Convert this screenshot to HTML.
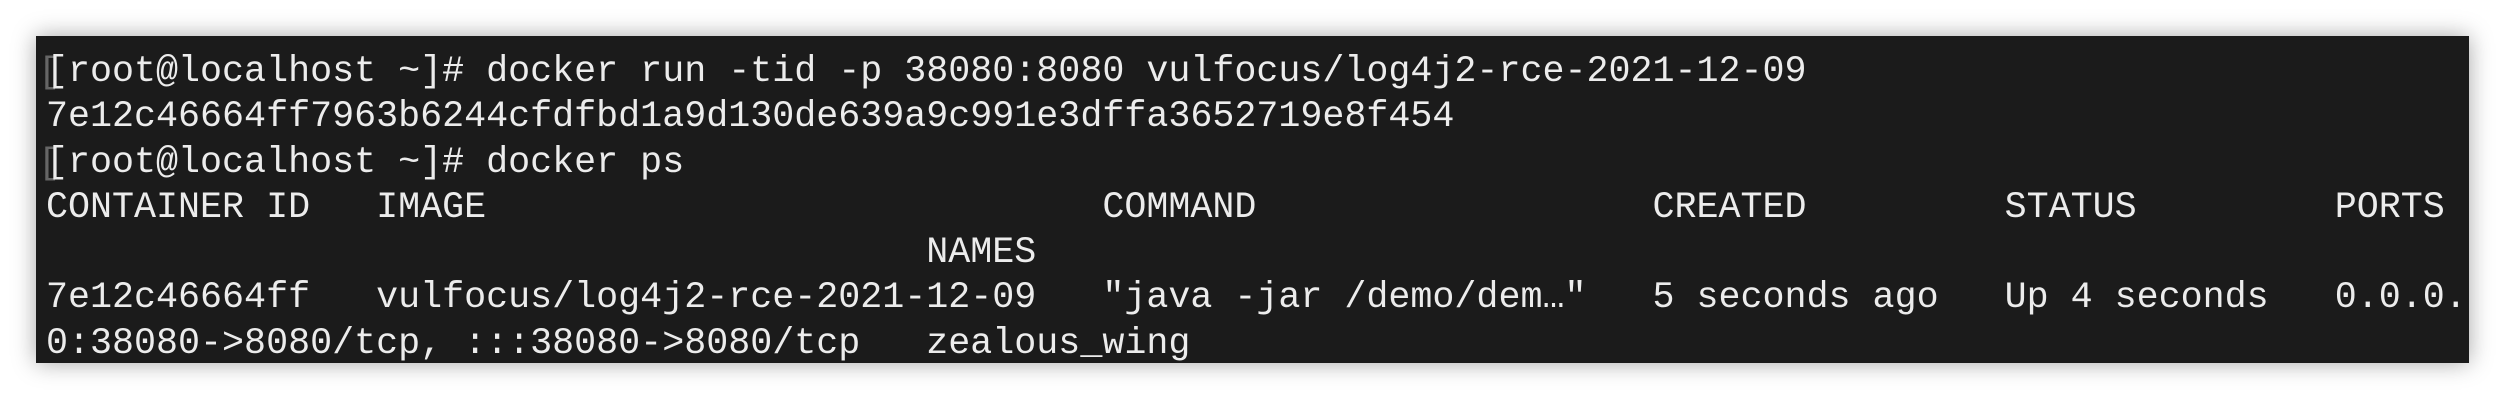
<!DOCTYPE html>
<html><head><meta charset="utf-8"><style>
html,body{margin:0;padding:0;background:#fff;width:2506px;height:400px;overflow:hidden}
.box{position:absolute;left:36px;top:36px;width:2433px;height:327px;background:#1b1b1b;box-shadow:0 0 22px rgba(0,0,0,.35)}
pre{position:absolute;left:46px;top:50px;margin:0;font-family:"Liberation Mono",monospace;font-size:36.68px;line-height:45.3px;color:#ececec;white-space:pre}
.f{position:absolute;left:38px;font-family:"Liberation Mono",monospace;font-size:36.5px;color:#666}
</style></head><body>
<div class="box"></div>
<div class="f" style="top:52px">[</div>
<div class="f" style="top:143px">[</div>
<pre>[root@localhost ~]# docker run -tid -p 38080:8080 vulfocus/log4j2-rce-2021-12-09
7e12c46664ff7963b6244cfdfbd1a9d130de639a9c991e3dffa3652719e8f454
[root@localhost ~]# docker ps
CONTAINER ID   IMAGE                            COMMAND                  CREATED         STATUS         PORTS
                                        NAMES
7e12c46664ff   vulfocus/log4j2-rce-2021-12-09   "java -jar /demo/dem…"   5 seconds ago   Up 4 seconds   0.0.0.
0:38080-&gt;8080/tcp, :::38080-&gt;8080/tcp   zealous_wing</pre>
</body></html>
